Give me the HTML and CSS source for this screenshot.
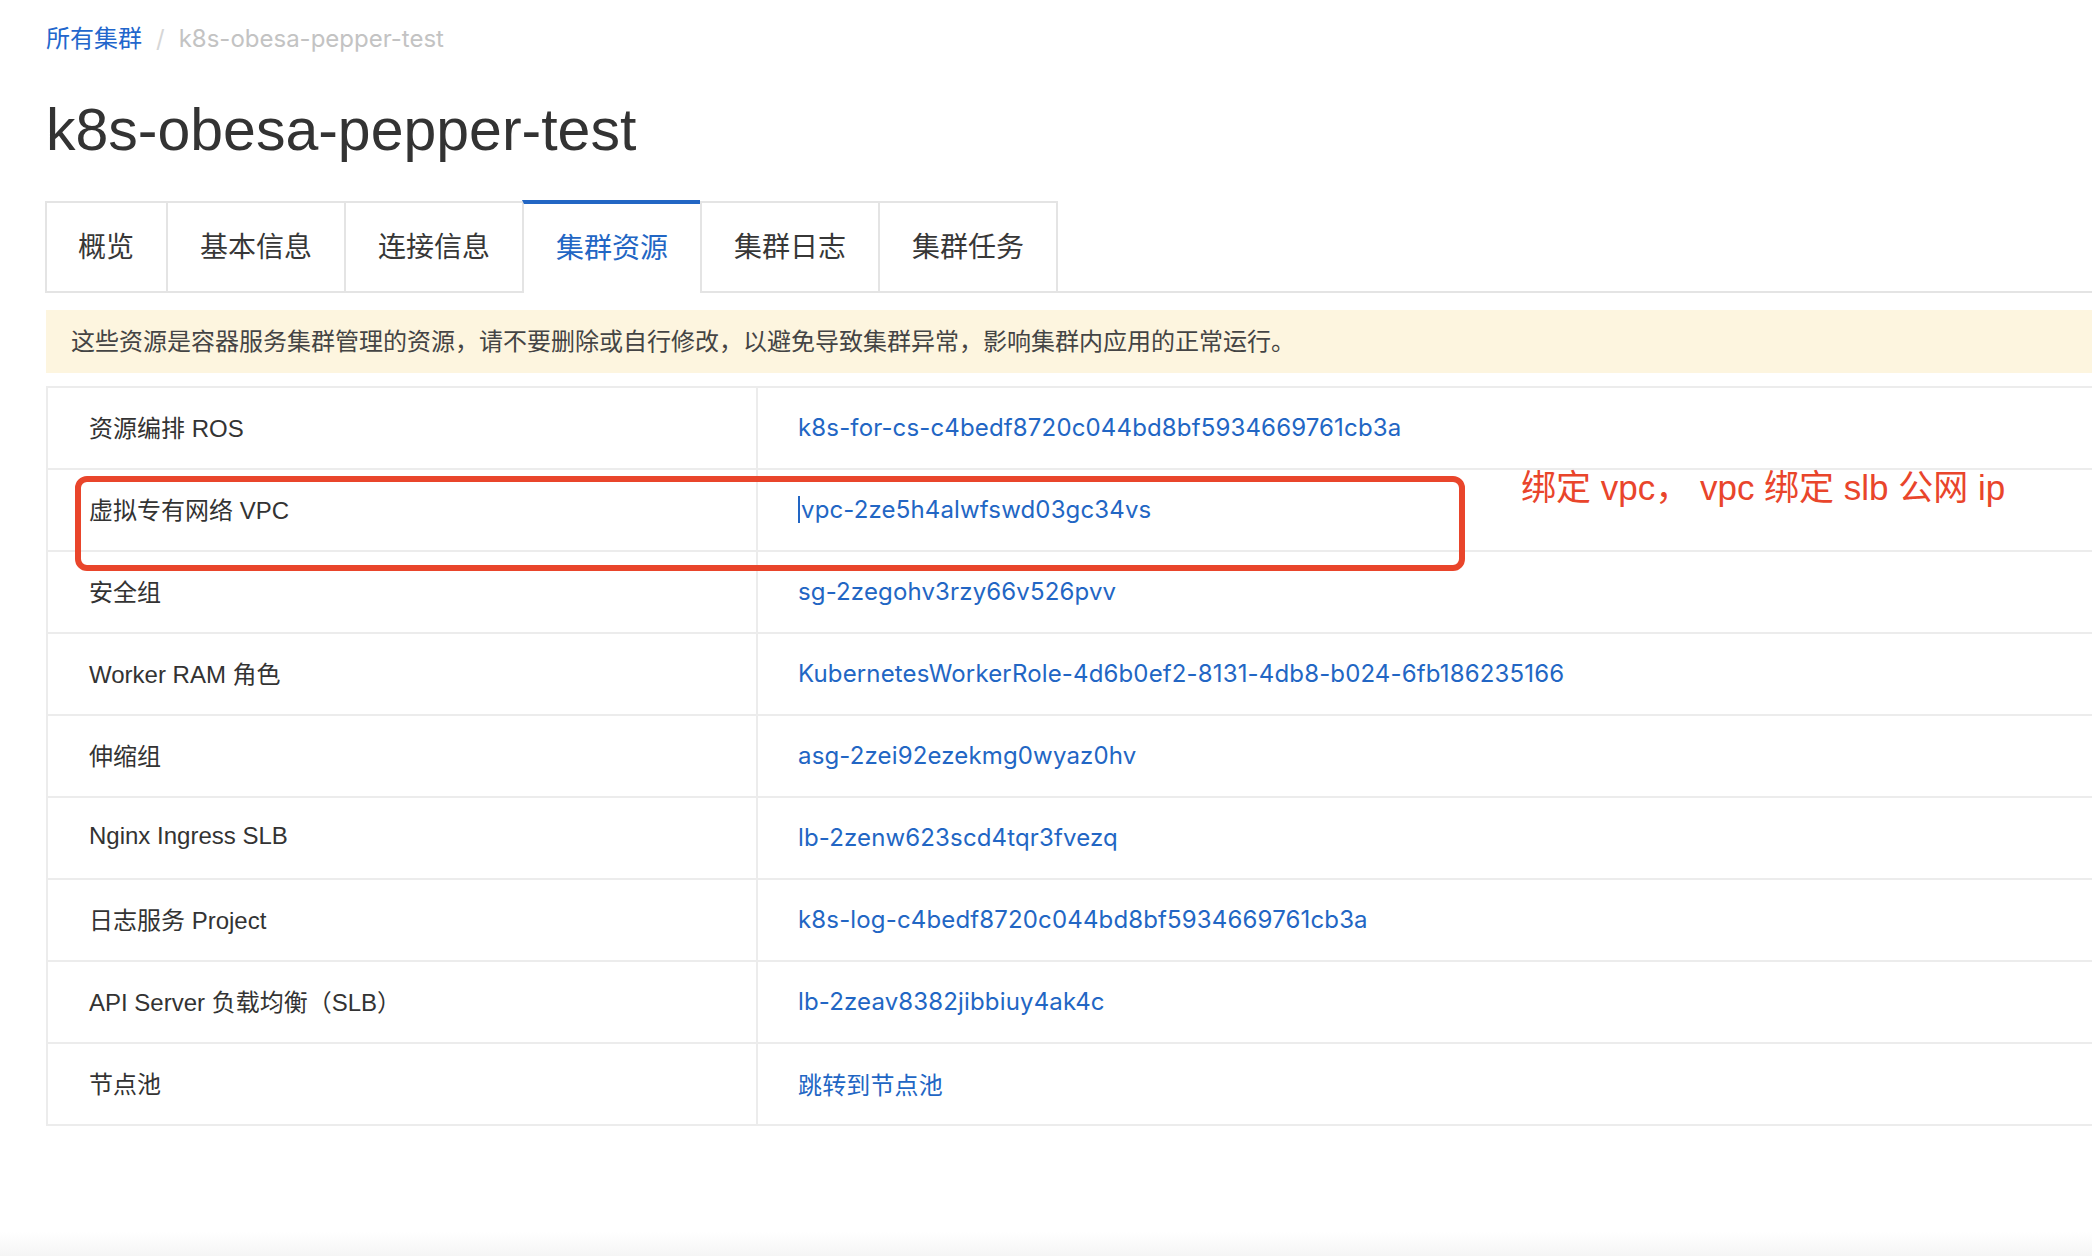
FILE: index.html
```html
<!DOCTYPE html>
<html lang="zh-CN">
<head>
<meta charset="utf-8">
<title>k8s-obesa-pepper-test</title>
<link rel="stylesheet" href="styles.css">
</head>
<body>
<div class="page">
  <div class="breadcrumb">
    <a class="crumb-link" href="#">所有集群</a>
    <span class="crumb-sep">/</span>
    <span class="crumb-current">k8s-obesa-pepper-test</span>
  </div>
  <h1 class="title">k8s-obesa-pepper-test</h1>
  <div class="tabs">
    <div class="tab">概览</div>
    <div class="tab">基本信息</div>
    <div class="tab">连接信息</div>
    <div class="tab tab-active">集群资源</div>
    <div class="tab">集群日志</div>
    <div class="tab tab-last">集群任务</div>
  </div>
  <div class="notice">这些资源是容器服务集群管理的资源，请不要删除或自行修改，以避免导致集群异常，影响集群内应用的正常运行。</div>
  <div class="res-table">
    <div class="row">
      <div class="cell label">资源编排 ROS</div>
      <div class="cell value"><a class="link" href="#">k8s-for-cs-c4bedf8720c044bd8bf5934669761cb3a</a></div>
    </div>
    <div class="row">
      <div class="cell label">虚拟专有网络 VPC</div>
      <div class="cell value"><span class="caret"></span><a class="link" href="#">vpc-2ze5h4alwfswd03gc34vs</a></div>
    </div>
    <div class="row">
      <div class="cell label">安全组</div>
      <div class="cell value"><a class="link" href="#">sg-2zegohv3rzy66v526pvv</a></div>
    </div>
    <div class="row">
      <div class="cell label">Worker RAM 角色</div>
      <div class="cell value"><a class="link" href="#">KubernetesWorkerRole-4d6b0ef2-8131-4db8-b024-6fb186235166</a></div>
    </div>
    <div class="row">
      <div class="cell label">伸缩组</div>
      <div class="cell value"><a class="link" href="#">asg-2zei92ezekmg0wyaz0hv</a></div>
    </div>
    <div class="row">
      <div class="cell label">Nginx Ingress SLB</div>
      <div class="cell value"><a class="link" href="#">lb-2zenw623scd4tqr3fvezq</a></div>
    </div>
    <div class="row">
      <div class="cell label">日志服务 Project</div>
      <div class="cell value"><a class="link" href="#">k8s-log-c4bedf8720c044bd8bf5934669761cb3a</a></div>
    </div>
    <div class="row">
      <div class="cell label">API Server 负载均衡（SLB）</div>
      <div class="cell value"><a class="link" href="#">lb-2zeav8382jibbiuy4ak4c</a></div>
    </div>
    <div class="row">
      <div class="cell label">节点池</div>
      <div class="cell value"><a class="link" href="#">跳转到节点池</a></div>
    </div>
    <div class="mark-box"></div>
    <div class="mark-text">绑定 vpc， vpc 绑定 slb 公网 ip</div>
  </div>
</div>
</body>
</html>
```

FILE: styles.css
```css
html, body {
  margin: 0;
  padding: 0;
}
body {
  width: 2092px;
  height: 1256px;
  overflow: hidden;
  background: linear-gradient(to bottom, #ffffff 0, #ffffff 1232px, #f5f5f5 1256px);
  font-family: "Liberation Sans", "Noto Sans CJK SC", sans-serif;
  color: #333;
}
.page {
  padding-left: 46px;
}
.breadcrumb {
  padding-top: 21px;
  height: 36px;
  line-height: 36px;
  font-size: 24px;
  display: flex;
  align-items: center;
  font-family: "Inter", "Noto Sans CJK SC", sans-serif;
}
.crumb-link {
  color: #2266cc;
  text-decoration: none;
  font-size: 24px;
}
.crumb-sep {
  color: #d6d6d6;
  margin: 0 14px 0 14px;
}
.crumb-current {
  color: #c3c3c3;
}
.title {
  margin: 38px 0 0 0;
  height: 70px;
  line-height: 70px;
  font-size: 59px;
  font-weight: normal;
  color: #333;
  font-family: "Liberation Sans", sans-serif;
}
.tabs {
  margin-top: 35px;
  margin-left: -1px;
  height: 91px;
  display: flex;
  align-items: flex-end;
  border-bottom: 2px solid #e4e4e4;
}
.tab {
  box-sizing: border-box;
  height: 90px;
  padding: 0 32px 4px 32px;
  border-left: 2px solid #e4e4e4;
  border-top: 2px solid #e4e4e4;
  background: #fff;
  font-size: 28px;
  color: #373737;
  display: flex;
  align-items: center;
}
.tab:first-child {
  padding-left: 31px;
}
.tab-last {
  border-right: 2px solid #e4e4e4;
}
.tab-active {
  height: 93px;
  margin-bottom: -2px;
  padding-bottom: 6px;
  border-top: 4px solid #2266c4;
  color: #2266c4;
}
.notice {
  margin-top: 17px;
  height: 63px;
  line-height: 63px;
  padding-left: 25px;
  background: #fdf5df;
  font-size: 24px;
  color: #444;
}
.res-table {
  position: relative;
  margin-top: 13px;
  border-top: 2px solid #ececec;
  border-left: 2px solid #ececec;
}
.row {
  display: grid;
  grid-template-columns: 710px 1fr;
  height: 82px;
  box-sizing: border-box;
  border-bottom: 2px solid #ececec;
}
.cell {
  display: flex;
  align-items: center;
  font-size: 24px;
}
.label {
  box-sizing: border-box;
  border-right: 2px solid #ececec;
  padding-left: 41px;
  padding-bottom: 4px;
  color: #333;
}
.value {
  padding-left: 40px;
  padding-bottom: 1px;
}
.link {
  color: #2266c4;
  text-decoration: none;
  font-family: "Inter", "Noto Sans CJK SC", sans-serif;
  font-size: 24px;
  letter-spacing: 0.15px;
}
.caret {
  display: inline-block;
  width: 2px;
  height: 27px;
  background: #2266c4;
  margin-right: 1px;
}
.mark-box {
  position: absolute;
  left: 27px;
  top: 88px;
  width: 1390px;
  height: 95px;
  box-sizing: border-box;
  border: 6px solid #e9452b;
  border-radius: 12px;
}
.mark-text {
  position: absolute;
  left: 1473px;
  top: 79px;
  line-height: 42px;
  font-size: 35px;
  color: #e9452b;
  white-space: nowrap;
}
```
